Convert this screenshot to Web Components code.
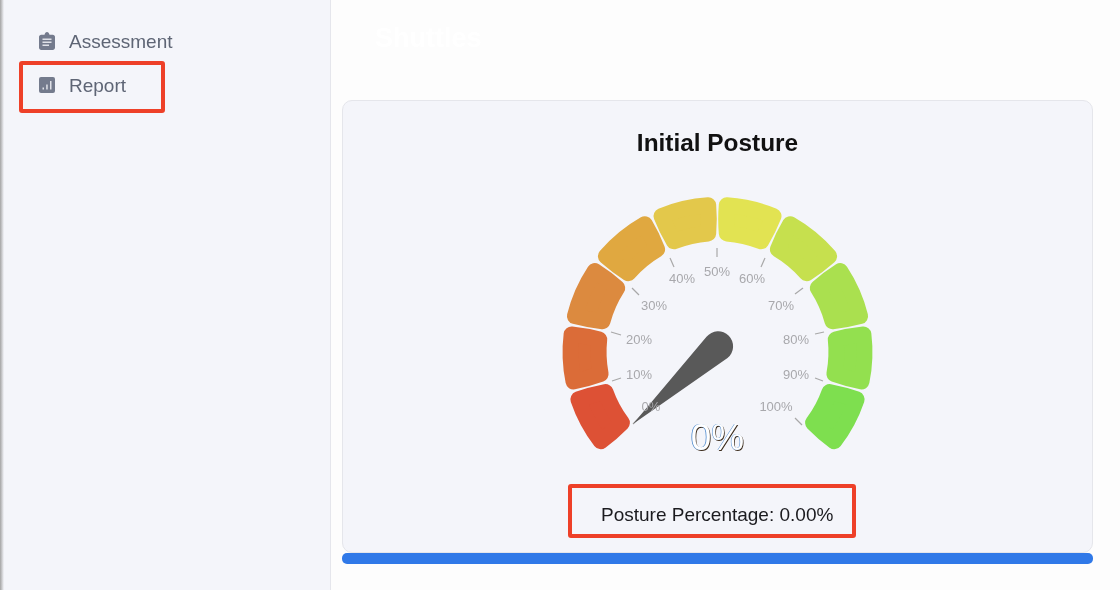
<!DOCTYPE html>
<html lang="en">
<head>
<meta charset="utf-8">
<title>Posture Report</title>
<style>
  html, body { margin: 0; height: 100%; background: #fdfdfd; }
  body { font-family: "Liberation Sans", Arial, sans-serif; overflow: hidden; }
  .nav-mark { width: 146px; height: 52px; padding-bottom: 2px; --nav-pad: 16px; --nav-height: 42px; }
</style>
</head>
<body>
<app-shell>
  <side-nav slot="nav">
    <nav-item icon="clipboard">Assessment</nav-item>
    <mark-box class="nav-mark"><nav-item icon="chart">Report</nav-item></mark-box>
  </side-nav>
  <page-main slot="main" heading="Shuttles">
    <posture-card heading="Initial Posture" value="0.00"></posture-card>
    <progress-bar></progress-bar>
  </page-main>
</app-shell>

<script>
class AppShell extends HTMLElement {
    constructor() {
        super();
        this.attachShadow({ mode: 'open' });
        this.shadowRoot.innerHTML = `
            <style>
                :host {
                    display: flex;
                    width: 1120px;
                    height: 590px;
                    overflow: hidden;
                    filter: blur(0.35px);
                }
                .edge { width: 4px; flex: none; background: linear-gradient(to right, #a3a3a3, #f4f5fa); }
            </style>
            <div class="edge"></div>
            <slot name="nav"></slot>
            <slot name="main"></slot>
        `;
    }
}

class SideNav extends HTMLElement {
    constructor() {
        super();
        this.attachShadow({ mode: 'open' });
        this.shadowRoot.innerHTML = `
            <style>
                :host {
                    display: flex;
                    flex-direction: column;
                    align-items: flex-start;
                    box-sizing: border-box;
                    width: 327px;
                    flex: none;
                    height: 100%;
                    padding: 23px 0 0 15px;
                    background: #f4f5fa;
                    border-right: 1px solid #e5e6ec;
                }
            </style>
            <slot></slot>
        `;
    }
}

const NAV_ICONS = {
    clipboard: {
        box: '0 0 16 18',
        shapes: `<path d="M5.500 2.800C5.800 1.200 6.800 0 8 0s2.200 1.200 2.500 2.800h3.200c1.300 0 2.300 1 2.300 2.200v10.800c0 1.200-1 2.200-2.300 2.200H2.300C1 18 0 17 0 15.800V5c0-1.200 1-2.200 2.300-2.200z"/>
            <path class="mark" d="M3.500 6.500h9V8h-9zM3.500 9.500h9V11h-9zM3.500 12.500h6.500V14H3.500z"/>`
    },
    chart: {
        box: '0 0 16 16',
        shapes: `<rect width="16" height="16" rx="2"/>
            <path class="mark" d="M3.500 10.500h1.500V12.500H3.500zM7.200 7.500h1.500V12.500H7.200zM11 4h1.500V12.500H11z"/>`
    }
};

class NavItem extends HTMLElement {
    constructor() {
        super();
        this.attachShadow({ mode: 'open' });
    }

    connectedCallback() {
        const icon = NAV_ICONS[this.getAttribute('icon')];
        this.shadowRoot.innerHTML = `
            <style>
                :host {
                    display: flex;
                    align-items: center;
                    gap: 14px;
                    height: var(--nav-height, 38px);
                    padding-left: var(--nav-pad, 20px);
                    font-size: 19px;
                    color: #5e6575;
                }
                svg { width: 16px; flex: none; margin-bottom: 2px; fill: #747b8d; }
                .mark { fill: #dfe1e8; }
            </style>
            <svg viewBox="${icon.box}">${icon.shapes}</svg>
            <slot></slot>
        `;
    }
}

// red annotation frame drawn round a piece of the page
class MarkBox extends HTMLElement {
    constructor() {
        super();
        this.attachShadow({ mode: 'open' });
        this.shadowRoot.innerHTML = `
            <style>
                :host {
                    display: block;
                    box-sizing: border-box;
                    border: 4px solid #ee4028;
                    border-radius: 3px;
                }
            </style>
            <slot></slot>
        `;
    }
}

class PageMain extends HTMLElement {
    constructor() {
        super();
        this.attachShadow({ mode: 'open' });
    }

    connectedCallback() {
        const heading = this.getAttribute('heading');
        this.shadowRoot.innerHTML = `
            <style>
                :host {
                    display: flex;
                    flex-direction: column;
                    flex: 1;
                    min-width: 0;
                    box-sizing: border-box;
                    height: 100%;
                    padding: 0 27px 0 11px;
                    background: #fdfdfd;
                }
                header {
                    height: 100px;
                    flex: none;
                    box-sizing: border-box;
                    padding: 22px 0 0 33px;
                    font-size: 27px;
                    line-height: 32px;
                    font-weight: bold;
                    color: #ffffff;
                }
            </style>
            <header>${heading}</header>
            <slot></slot>
        `;
    }
}

class PostureGauge extends HTMLElement {
    constructor() {
        super();
        this.attachShadow({ mode: 'open' });
    }

    // one band of the dial, with its corners rounded by a wide round-joined stroke
    segmentPath(from, to) {
        const cx = 717.5, cy = 352, rOut = 147, rIn = 119, off = 9.3;
        const xy = (r, deg) => {
            const a = deg * Math.PI / 180;
            return [cx - r * Math.cos(a), cy - r * Math.sin(a)];
        };
        const point = (r, deg) => xy(r, deg).map(n => n.toFixed(1)).join(' ');
        const shift = r => Math.asin(off / r) * 180 / Math.PI;
        const rMid = (rOut + rIn) / 2;
        // the sides bulge a little towards the neighbouring band
        const bulge = (deg, sign) => xy(rMid, deg + sign * (shift(rMid) - 0.5)).map(n => n.toFixed(1)).join(' ');
        return `M${point(rOut, from + shift(rOut))}
            A${rOut} ${rOut} 0 0 1 ${point(rOut, to - shift(rOut))}
            Q${bulge(to, -1)} ${point(rIn, to - shift(rIn))}
            A${rIn} ${rIn} 0 0 0 ${point(rIn, from + shift(rIn))}
            Q${bulge(from, 1)} ${point(rOut, from + shift(rOut))}Z`;
    }

    connectedCallback() {
        const colors = ['#dd5135', '#db6c38', '#dc8a3f', '#e0a840', '#e3c84b',
            '#e2e352', '#c6e04e', '#aae04f', '#93e04f', '#7edf4f'];
        const edges = [-41, -15.2, 10.5, 37, 64, 90, 116, 143, 169.5, 195.2, 221];
        const segments = colors.map((color, i) => {
            const path = this.segmentPath(edges[i], edges[i + 1]);
            return `<path d="${path}" fill="${color}" stroke="${color}" stroke-width="16" stroke-linejoin="round"/>`;
        }).join('');

        const ticks = [
            [633, 424, 640, 417], [612, 381, 621, 378], [611, 332, 621, 335], [632, 288, 639, 295],
            [670, 258, 674, 267], [717, 248, 717, 257], [765, 258, 761, 267], [803, 288, 795, 294],
            [824, 332, 815, 334], [823, 381, 815, 378], [795, 418, 802, 425]
        ].map(t => `<line x1="${t[0]}" y1="${t[1]}" x2="${t[2]}" y2="${t[3]}"/>`).join('');

        const labels = [
            ['0%', 651, 411], ['10%', 639, 379], ['20%', 639, 344], ['30%', 654, 310],
            ['40%', 682, 283], ['50%', 717, 276], ['60%', 752, 283], ['70%', 781, 310],
            ['80%', 796, 344], ['90%', 796, 379], ['100%', 776, 411]
        ].map(l => `<text x="${l[1]}" y="${l[2]}">${l[0]}</text>`).join('');

        this.shadowRoot.innerHTML = `
            <style>
                :host { display: block; width: 335px; height: 270px; }
                svg { display: block; }
                .ticks line { stroke: #a8a8a8; stroke-width: 1.2; }
                .labels text {
                    font: 13px "Liberation Sans", Arial, sans-serif;
                    fill: #a8a8ac;
                    text-anchor: middle;
                }
                .reading {
                    font: 37px "Liberation Sans", Arial, sans-serif;
                    fill: #ffffff;
                    text-anchor: middle;
                    text-shadow: -0.7px 0 0.6px #3d7fc9, 0.7px 0.7px 0.6px #3a2a1a;
                }
            </style>
            <svg width="335" height="270" viewBox="550 190 335 270">
                ${segments}
                <g class="ticks">${ticks}</g>
                <path d="M633 424L706.500 336.800A15 15 0 1 1 727.500 358Z" fill="#595959"/>
                <g class="labels">${labels}</g>
                <text class="reading" x="717.500" y="450">${this.getAttribute('reading')}</text>
            </svg>
        `;
    }
}

class PostureCard extends HTMLElement {
    constructor() {
        super();
        this.attachShadow({ mode: 'open' });
    }

    connectedCallback() {
        const value = this.getAttribute('value');
        this.shadowRoot.innerHTML = `
            <style>
                :host {
                    display: flex;
                    flex-direction: column;
                    align-items: center;
                    box-sizing: border-box;
                    height: 453px;
                    flex: none;
                    padding-top: 28px;
                    background: #f4f5fa;
                    border: 1px solid #e5e6eb;
                    border-radius: 10px;
                }
                h2 {
                    margin: 0 0 33px;
                    font-size: 24.4px;
                    line-height: 28px;
                    font-weight: bold;
                    color: #111111;
                }
                mark-box {
                    width: 288px;
                    height: 54px;
                    margin: 24px 11px 0 0;
                    padding: 8px 0 0 29px;
                    display: flex;
                    align-items: center;
                    font-size: 19px;
                    color: #1b1b1f;
                }
            </style>
            <h2>${this.getAttribute('heading')}</h2>
            <posture-gauge reading="${Math.round(parseFloat(value))}%"></posture-gauge>
            <mark-box>Posture Percentage: ${value}%</mark-box>
        `;
    }
}

class ProgressBar extends HTMLElement {
    constructor() {
        super();
        this.attachShadow({ mode: 'open' });
        this.shadowRoot.innerHTML = `
            <style>
                :host {
                    display: block;
                    height: 11px;
                    flex: none;
                    background: #3079e8;
                    border-radius: 5px;
                }
            </style>
        `;
    }
}

customElements.define('app-shell', AppShell);
customElements.define('side-nav', SideNav);
customElements.define('nav-item', NavItem);
customElements.define('mark-box', MarkBox);
customElements.define('page-main', PageMain);
customElements.define('posture-gauge', PostureGauge);
customElements.define('posture-card', PostureCard);
customElements.define('progress-bar', ProgressBar);
</script>
</body>
</html>
